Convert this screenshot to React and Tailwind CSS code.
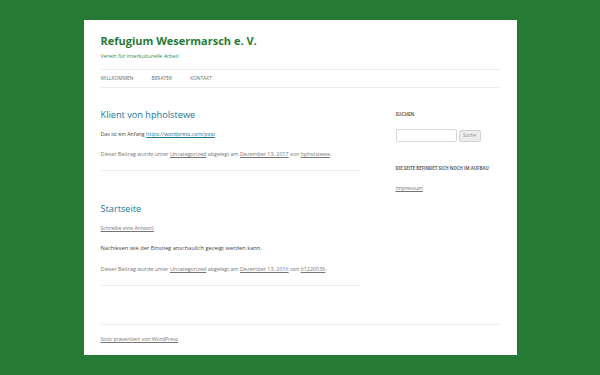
import React from 'react';

const font = { fontFamily: '"Open Sans", "Liberation Sans", sans-serif' };

const Meta = ({ date, author }) => (
  <p className="text-[5.4px] leading-[8px] text-[#757575]">
    Dieser Beitrag wurde unter <a className="underline">Uncategorized</a> abgelegt am{' '}
    <a className="underline">{date}</a> von <a className="underline">{author}</a>.
  </p>
);

const App = () => {
  return (
    <div className="min-h-[375px] bg-[#277a35] pt-5" style={font}>
      <div className="mx-auto w-[433px] h-[335px] bg-white px-[17px] flex flex-col">
        {/* header */}
        <header className="pt-[13px]">
          <h1 className="text-[11px] font-bold leading-[16px] text-[#277a35]">Refugium Wesermarsch e. V.</h1>
          <p className="mt-[3px] text-[5.4px] leading-[8px] text-[#3a8a44]">Verein für interkulturelle Arbeit</p>
          <nav className="mt-[9px] border-y border-[#ededed] h-[19px] flex items-center gap-[18px] text-[4.9px] text-[#6a6a6a] uppercase">
            <span>Willkommen</span>
            <span>Berater</span>
            <span>Kontakt</span>
          </nav>
        </header>

        <div className="flex flex-1">
          {/* main */}
          <main className="w-[260px] pt-[20px]">
            <article className="border-b border-[#ededed] pb-[12px]">
              <h2 className="text-[9.2px] leading-[13px] text-[#21759b]">Klient von hpholstewe</h2>
              <p className="mt-[9px] text-[5.3px] leading-[9px] text-[#444]">
                Das ist ein Anfang <a className="underline text-[#21759b]">https://wordpress.com/post</a>
              </p>
              <div className="mt-[11px]">
                <Meta date="Dezember 13, 2017" author="hpholstewe" />
              </div>
            </article>
            <article className="border-b border-[#ededed] pb-[12px] mt-[31px]">
              <h2 className="text-[9.2px] leading-[13px] text-[#21759b]">Startseite</h2>
              <p className="mt-[9px] text-[5.2px] leading-[8px] text-[#757575] underline">Schreibe eine Antwort</p>
              <p className="mt-[12px] text-[5.7px] leading-[9px] text-[#444]">
                Nachlesen wie der Einstieg anschaulich gezeigt werden kann.
              </p>
              <div className="mt-[12px]">
                <Meta date="Dezember 13, 2016" author="61220036" />
              </div>
            </article>
          </main>

          {/* sidebar */}
          <aside className="ml-auto w-[104px] pt-[23px]">
            <h3 className="text-[4.6px] font-bold leading-[7px] text-[#636363] uppercase">Suchen</h3>
            <div className="mt-[11px] flex items-center gap-[2px]">
              <div className="w-[61px] h-[13px] border border-[#d8d8d8] rounded-[2px] bg-white"></div>
              <div className="w-[22px] h-[12px] border border-[#d2d2d2] rounded-[2px] bg-[#ececec] text-[4.6px] text-[#8a8a8a] flex items-center justify-center">Suche</div>
            </div>
            <h3 className="mt-[23px] text-[4.4px] font-bold leading-[7px] text-[#636363] uppercase">Die Seite befindet sich noch im Aufbau</h3>
            <p className="mt-[12px] text-[5.2px] leading-[8px] text-[#757575] underline">Impressum</p>
          </aside>
        </div>

        {/* footer */}
        <footer className="border-t border-[#ededed] h-[31px] flex items-center">
          <span className="text-[5.2px] text-[#757575] underline">Stolz präsentiert von WordPress</span>
        </footer>
      </div>
    </div>
  );
};

export default App;
